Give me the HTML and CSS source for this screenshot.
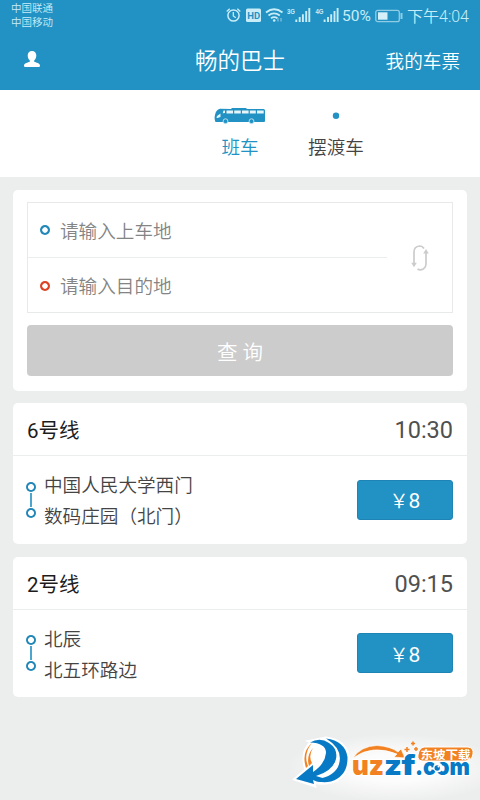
FILE: index.html
```html
<!DOCTYPE html>
<html lang="zh-CN">
<head>
<meta charset="utf-8">
<title>畅的巴士</title>
<link rel="stylesheet" href="styles.css">
</head>
<body>
<header class="top">
  <div class="status">
    <div class="carriers"><span>中国联通</span><span>中国移动</span></div>
    <svg class="status-icons" width="120" height="30" viewBox="222 0 120 30" fill="none" stroke="#c9edf8">
      <circle cx="233.500" cy="15.500" r="5.600" stroke-width="1.500"/>
      <path d="M233.300 12v4l2.500 1.700M226.700 11.500l3-2.800M240.300 11.500l-3-2.800" stroke-width="1.300"/>
      <rect x="246" y="8.500" width="15" height="13.500" rx="1.500" fill="#c9edf8" stroke="none"/>
      <text x="247.300" y="18.800" class="hd">HD</text>
      <path d="M266 12.500q8-6.500 16.500 0M268.500 15.500q5.500-4.200 11.300 0M271 18.300q3.200-2.400 6.400 0" stroke-width="1.800"/>
      <circle cx="274.200" cy="20.500" r="1.300" fill="#c9edf8" stroke="none"/>
      <path d="M278 21.500v-3.500M281 18v3.500" stroke="#7fc3de" stroke-width="1.300"/>
      <text x="287" y="14.300" class="net" textLength="8" lengthAdjust="spacingAndGlyphs">3G</text>
      <path d="M296.300 19.500v2.500M299.700 17v5M302.900 14.200v7.800M306.200 11v11M309.300 8v14" stroke-width="1.900"/>
      <text x="315.400" y="14.300" class="net" textLength="8" lengthAdjust="spacingAndGlyphs">4G</text>
      <path d="M324.600 19.500v2.500M328 17v5M331.200 14.200v7.800M334.500 11v11M337.600 8v14" stroke-width="1.900"/>
    </svg>
    <span class="percent">50%</span>
    <svg class="battery" width="28" height="14" viewBox="0 0 28 14">
      <rect x=".8" y="1.300" width="23.500" height="11.400" rx="2" fill="none" stroke="#90cde5" stroke-width="1.300"/>
      <rect x="3" y="3.300" width="9.500" height="7.400" fill="#d5f0f8"/>
      <rect x="25.500" y="4" width="2" height="6" fill="#90cde5"/>
    </svg>
    <span class="clock">下午4:04</span>
  </div>
  <div class="navbar">
    <svg class="user" width="18" height="18" viewBox="0 0 18 18" fill="#fff"><path d="M9 1C6.300 1 4.700 2.800 4.700 5.500c0 2.300.9 4 2.100 4.900v1.300C5 12.500 1 13 1 15.400 1 16.500 1.600 17 2.600 17h12.800c1 0 1.600-.5 1.600-1.600 0-2.400-4-2.900-5.800-3.700v-1.300c1.200-.9 2.100-2.600 2.100-4.900C13.300 2.800 11.700 1 9 1z"/></svg>
    <h1>畅的巴士</h1>
    <a class="tickets">我的车票</a>
  </div>
</header>
<nav class="tabs">
  <div class="tab active">
    <svg width="52" height="18" viewBox="0 0 52 18">
      <path fill="#2192c3" d="M6 1.800 17 2l1-1h14l1 1h16.500q1.500 0 1.500 1.600V14q0 1-1 1H1.500q-1.500-3-.5-7Q2 2.500 6 1.800z"/>
      <path fill="#e4f4fa" d="M9.500 3.500H11V6L8.700 6.200zM12.500 3.500H19V6.500h-6.500zM20.200 3.500h6.600v3h-6.600zM28 3.500h6.600v3H28zM35.800 3.500h6v3h-6zM43 3.500h6.700v3H43zM3 9 6.500 6.500v3.500L3.500 11H2.500z"/>
      <g fill="#2192c3" stroke="#b6dfef"><circle cx="11.500" cy="14.200" r="2.400"/><circle cx="37.500" cy="14.200" r="2.400"/></g>
    </svg>
    <span>班车</span>
  </div>
  <div class="tab">
    <svg width="52" height="18" viewBox="0 0 52 18"><circle cx="26" cy="8.700" r="3.200" fill="#2192c3"/></svg>
    <span>摆渡车</span>
  </div>
</nav>
<main>
  <section class="card search">
    <div class="form">
      <div class="fields">
        <div class="field"><i class="ring"></i><span>请输入上车地</span></div>
        <div class="field"><i class="ring red"></i><span>请输入目的地</span></div>
      </div>
      <svg class="swap" width="20" height="28" viewBox="0 0 20 28" fill="none" stroke="#ccc" stroke-width="1.700">
        <path d="M14 4.500Q12.500 2 9.500 2 4 2.500 4 8v12M7.500 25q1.500 1 3 .9Q16 25 16 19.500V8"/>
        <path d="M1.200 18.800h5.600L4 23.300zM13.200 9.500h5.600L16 5z" fill="#ccc" stroke="none"/>
      </svg>
    </div>
    <button class="query">查 询</button>
  </section>
  <section class="card line">
    <div class="head"><h2>6号线</h2><time>10:30</time></div>
    <div class="body">
      <div class="route"><i class="ring"></i><i class="link"></i><i class="ring"></i></div>
      <div class="stops"><span>中国人民大学西门</span><span>数码庄园（北门）</span></div>
      <button class="price"><span>￥</span>8</button>
    </div>
  </section>
  <section class="card line">
    <div class="head"><h2>2号线</h2><time>09:15</time></div>
    <div class="body">
      <div class="route"><i class="ring"></i><i class="link"></i><i class="ring"></i></div>
      <div class="stops"><span>北辰</span><span>北五环路边</span></div>
      <button class="price"><span>￥</span>8</button>
    </div>
  </section>
</main>
<div class="watermark">
  <svg width="190" height="72" viewBox="290 728 190 72">
    <path class="halo" d="M312 742Q301 752 306 768L310 767 296 779 314 785 313 781Q325 785 336 780 348 772 348 757 345 741 326 738.500L311 741.500z"/>
    <path fill="#f28121" d="M312 743Q301 752 306 768L308 766Q303 754 312 743zM313 748Q306 756 309 766L312 763Q308 756 313 748z"/>
    <path fill="#0879c4" d="M310 742.500Q320 737 329 743 338 749 336 759 333 771 316 776L329 780Q320 784 313 780L314 784 296 779 313 765 313 772Q325 764 326 753 326 743 310 742.500z"/>
    <path fill="#0879c4" d="M326 738.500Q345 741 347.500 757 348 776 331 781.500 321 784 313 779 331 779 338 767 345 750 326 738.500z"/>
    <path fill="#f28121" stroke="#fff" stroke-width=".6" d="M353 758Q361 746 377 745.500 391 746.500 398 752L401 749 405 758 394 757 397 754Q372 744 353 758z"/>
    <text class="brand orange" x="352" y="774.500" textLength="32" lengthAdjust="spacingAndGlyphs">uz</text>
    <text class="brand blue" x="384" y="774.500" textLength="18" lengthAdjust="spacingAndGlyphs">z</text>
    <text class="brand blue" x="401.500" y="774.500" textLength="14" lengthAdjust="spacingAndGlyphs">f</text>
    <text class="brand blue small" x="415" y="774.500" textLength="55" lengthAdjust="spacingAndGlyphs">.com</text>
    <circle cx="438" cy="767.500" r="4.800" fill="#fff"/><circle cx="437.200" cy="768" r="2.700" fill="#0879c4"/><circle cx="438.500" cy="766.500" r="1" fill="#fff"/>
    <path stroke="#f28121" stroke-width="1.500" d="M407 747v5M404.500 749.500h5M413 741.500v4M411 743.500h4M416 747v4M414 749h4"/>
    <path fill="#f28121" stroke="#fff" stroke-width="1" d="M424 747h44q6 1 5 7-1 7-8 7h-43q-5-1-4-6 1-7 6-8z"/>
    <text class="brand-cn" x="420.500" y="758.800" textLength="50" lengthAdjust="spacingAndGlyphs">东坡下载</text>
  </svg>
</div>
</body>
</html>
```
FILE: styles.css
```css
* { box-sizing: border-box; }
body {
  margin: 0;
  width: 480px;
  height: 800px;
  overflow: hidden;
  position: relative;
  background: #eceeed;
  color: #444;
  font-family: Roboto, "Noto Sans CJK SC", sans-serif;
  font-size: 18.600px;
  font-weight: 350;
}
h1, h2 { margin: 0; font-weight: 350; }
button { border: 0; padding: 0; font: inherit; color: #fff; }
.top { height: 90px; background: #2192c3; color: #fff; }
.status { display: flex; height: 30px; align-items: center; padding: 0 10px 0 11px; color: #c9edf8; }
.carriers { display: flex; flex: none; flex-direction: column; font-size: 10.500px; line-height: 14px; width: 211px; padding-top: 2px; }
.status-icons { flex: none; }
.hd { font: 700 9.500px Roboto, sans-serif; fill: #2192c3; stroke: none; }
.net { font: 700 8px "Liberation Sans", sans-serif; fill: #c9edf8; stroke: none; }
.percent { flex: none; width: 31px; font-size: 15.500px; font-weight: 400; white-space: nowrap; padding-top: 2px; }
.battery { flex: none; margin: 2px 4px 0 2px; }
.clock { font-size: 16px; white-space: nowrap; }
.navbar { display: grid; grid-template-columns: 1fr auto 1fr; align-items: center; height: 60px; padding: 0 20px 2px 23px; }
.navbar h1 { font-size: 22.500px; margin-left: -3px; }
.tickets { justify-self: end; }
.tabs { display: flex; height: 87px; padding: 17px 0 0 192px; background: #fff; }
.tab { width: 96px; display: flex; flex-direction: column; align-items: center; line-height: 28px; gap: 9px; }
.tab svg { flex: none; }
.active { color: #2192c3; }
main { padding: 13px; display: flex; flex-direction: column; gap: 13px; }
.card { background: #fff; border-radius: 5px; }
.search { height: 201px; margin-bottom: -1px; padding: 12px 14px 14px; }
.form { display: flex; height: 111px; border: 1px solid #e8eaea; }
.fields { width: 359px; }
.field { height: 55px; display: flex; align-items: center; gap: 10px; padding-left: 12px; color: #848484; }
.field span { margin-top: -2px; }
.field:first-child { border-bottom: 1px solid #eceeee; }
.ring { flex: none; width: 10px; height: 10px; border-radius: 50%; background: radial-gradient(circle, #fff 2.400px, #2187b9 3.100px); }
.red { background: radial-gradient(circle, #fff 2.400px, #dc4224 3.100px); }
.swap { margin: 41px 0 0 23px; }
.query { display: block; width: 426px; height: 51px; margin-top: 12px; border-radius: 4px; background: #ccc; font-size: 20.500px; }
.line { height: 140.500px; }
.head { display: flex; align-items: center; justify-content: space-between; height: 53px; border-bottom: 1px solid #eceeee; padding: 0 14px; }
.head h2 { font-size: 20.500px; font-weight: 400; color: #1c1c1c; }
.head time { font-size: 23.500px; font-weight: 400; color: #505050; padding-top: 2px; }
.body { display: flex; height: 87px; align-items: center; padding: 0 14px 0 13px; }
.route { display: flex; flex-direction: column; align-items: center; }
.route .ring { background: radial-gradient(circle, #fff 2.600px, #2187b9 3.300px); }
.link { width: 2px; height: 14px; margin: 1px 0; background: #4ba5cd; }
.stops { display: flex; flex-direction: column; line-height: 31px; margin-left: 8px; flex: 1; padding-top: 5px; }
.price { width: 96px; height: 40px; border-radius: 3px; background: #2192c3; border: 1px solid #1d84b5; font-size: 21px; font-weight: 400; }
.price span { font-size: 19px; font-weight: 350; }
.watermark { position: absolute; left: 290px; top: 728px; width: 190px; height: 72px; background: radial-gradient(ellipse 110px 34px at 105px 40px, #fbfcfb 40%, transparent); }
.halo { fill: #fff; stroke: #fff; stroke-width: 4; }
.brand { font: 900 27.500px Inter, sans-serif; paint-order: stroke; stroke: #fff; stroke-width: 2px; }
.brand.small { font-size: 24px; }
.orange { fill: #f28121; }
.blue { fill: #0879c4; }
.brand-cn { font: 700 11.500px "Noto Sans CJK SC", sans-serif; fill: #fff; }
```
